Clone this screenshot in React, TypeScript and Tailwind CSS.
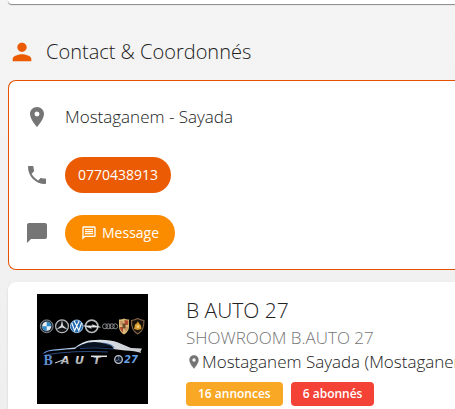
import type { ReactNode } from 'react'
import { MdChatBubble, MdLocationOn, MdOutlineMessage, MdPerson, MdPhone } from 'react-icons/md'

function ShopLogo() {
  return (
    <svg viewBox="0 0 111 110" className="h-[110px] w-[111px] shrink-0" role="img" aria-label="B Auto 27">
      <defs>
        <linearGradient id="chrome" x1="0" y1="0" x2="0" y2="1">
          <stop offset="0" stopColor="#f5f5f5" />
          <stop offset="1" stopColor="#8b8f96" />
        </linearGradient>
        <linearGradient id="body" x1="0" y1="0" x2="1" y2="0">
          <stop offset="0" stopColor="#5d8fdc" />
          <stop offset="0.4" stopColor="#dfe7f2" />
          <stop offset="1" stopColor="#c9ccd0" />
        </linearGradient>
      </defs>
      <rect width="111" height="110" fill="#000" />

      {/* BMW */}
      <circle cx="9.7" cy="32.3" r="6.4" fill="#27323d" stroke="#8e979e" strokeWidth="0.9" />
      <circle cx="9.7" cy="32.3" r="4.5" fill="#e8eef2" />
      <path d="M9.7 32.3v-4.5a4.5 4.5 0 0 1 4.5 4.5zM9.7 32.3v4.5a4.5 4.5 0 0 1-4.5-4.5z" fill="#2f8ac9" />

      {/* Mercedes */}
      <circle cx="25" cy="32.3" r="6.4" fill="#101214" stroke="#b3b8bb" strokeWidth="1.2" />
      <path d="m25 25.8 1.1 5.8 4.6 4-5.7-2.2-5.7 2.2 4.6-4z" fill="#d4d7d9" />

      {/* Volkswagen */}
      <circle cx="39.7" cy="32.3" r="6.3" fill="#226bb0" stroke="#9fc3e4" strokeWidth="1" />
      <path d="m37.2 27 2.5 5 2.5-5M34.8 29l2.8 7.6 2.1-4.3 2.1 4.3 2.8-7.6" fill="none" stroke="#fff" strokeWidth="1.1" />

      {/* Opel */}
      <circle cx="54.7" cy="32.3" r="6.2" fill="none" stroke="#b5b8ba" strokeWidth="1.6" />
      <path d="M46.5 31.8H56l-1-1.2 8.5 2.6h-10l1 1.2z" fill="#e2e4e5" stroke="#e2e4e5" strokeWidth="0.4" />

      {/* Audi */}
      <g fill="none" stroke="#8d9092" strokeWidth="0.9">
        <circle cx="68" cy="32.3" r="2.5" />
        <circle cx="71.4" cy="32.3" r="2.5" />
        <circle cx="74.8" cy="32.3" r="2.5" />
        <circle cx="78.2" cy="32.3" r="2.5" />
      </g>

      {/* Porsche */}
      <path d="M82 25.500q2.500.400 5-1 2.500 1.400 5 1v7q0 5-5 8-5-3-5-8z" fill="#d9ba78" />
      <path d="M87.500 26q2 .600 3.700.400V31h-3.700zM82.800 33H86v5.500q-3-2-3.200-5.500z" fill="#b04a33" />
      <path d="M83 28h3M83 30h3M88 34h3M88 36h2.300" stroke="#a4503a" strokeWidth="0.7" />
      <path d="M85.500 29.500h3v4L87 35l-1.500-1.500z" fill="#6b4c2e" />

      {/* Lamborghini */}
      <path d="M94.500 26.500q3.500-.5 6.200-2 2.700 1.500 6.200 2 .5 10-6.200 13.500-6.700-3.500-6.200-13.500z" fill="#17120b" stroke="#876749" strokeWidth="1.1" />
      <path d="m97 35 1-4.500 2-1.500.8-1.800 1.200 2 2 2.300.4 3.500-3.600 1z" fill="#d89a2b" />
      <path d="m99.500 31.500 2.500-.5.5 2.500-2.500.5z" fill="#f2d185" />

      {/* car outline */}
      <path d="M37 54q7-7 20-7.500Q70 46 79 53z" fill="#07111f" />
      <path d="M6 60q1-3.500 10-4.500l22-2q8-6.500 16-7.300 17-1.500 27 2.300l13 5.500 11 .5-1.500 3 .5 1.500q-6-2.500-16-2.500L76 55q1-3-6-5-14-4-25 .5-5 2-7 4.500-18 1-27 2.500z" fill="url(#body)" />
      <path d="M43 54.500q15-1.500 33 .5 4-3.500-10-6" fill="none" stroke="#274e91" strokeWidth="0.8" />
      <path d="M8 61q28-5 63-3" fill="none" stroke="#31558e" strokeWidth="0.9" />

      <text x="6.5" y="70.5" fill="#5f8fd2" fontSize="14" fontFamily="'Liberation Serif', serif" fontWeight="700">B</text>
      <g fontFamily="'DejaVu Sans', sans-serif" fontWeight="700" fontStyle="italic">
        <text x="24 38 56" y="69.500" fill="url(#chrome)" fontSize="11">AUT</text>
        <text x="87" y="69" fill="#68a0e5" fontSize="10">27</text>
      </g>
      <path d="m18 69 8-3" stroke="#c7c9cb" strokeWidth="1.200" />
      <path d="M54 62.300h16" stroke="#e2e3e5" strokeWidth="1.500" />
      <circle cx="81.500" cy="65.500" r="3.800" fill="#0d1727" stroke="#c3c8cf" strokeWidth="1.300" />
      <path d="m81.500 62 .5 3.500 2 2M82 65.500 79 67" stroke="#6f8db8" strokeWidth="0.700" />
    </svg>
  )
}

function ContactRow({ icon, children }: { icon: ReactNode; children: ReactNode }) {
  return (
    <li className="flex h-[58px] items-center gap-4">
      <span className="flex w-6 justify-center text-2xl text-[#757575]">{icon}</span>
      {children}
    </li>
  )
}

export default function App() {
  return (
    <main className="min-h-screen overflow-hidden bg-linear-to-b from-[#f4f4f4] to-[#efefef] pl-2 font-['Open_Sans','Noto_Sans',sans-serif] font-light text-[#212121]">
      <div className="h-1 rounded-bl-lg bg-white shadow-[0_1px_1px_rgba(0,0,0,0.45)]" />

      <h2 className="flex h-[76px] items-center gap-[10px] pt-5 text-xl">
        <MdPerson className="size-7 text-[#ea5b04]" />
        Contact &amp; Coordonnés
      </h2>

      <section className="rounded-l-lg border border-r-0 border-[#e65100] bg-white py-[7px] pl-4">
        <ul>
          <ContactRow icon={<MdLocationOn />}>
            <span className="text-[17px] leading-6">Mostaganem - Sayada</span>
          </ContactRow>
          <ContactRow icon={<MdPhone />}>
            <a href="tel:0770438913" className="flex h-9 items-center rounded-full bg-[#ea5b04] px-[13px] text-sm font-medium text-white">
              0770438913
            </a>
          </ContactRow>
          <ContactRow icon={<MdChatBubble />}>
            <button type="button" className="flex h-9 items-center gap-[5px] rounded-full bg-[#fb8c00] px-4 text-sm font-medium text-white">
              <MdOutlineMessage className="size-4" />
              Message
            </button>
          </ContactRow>
        </ul>
      </section>

      <section className="mt-3 flex gap-[38px] rounded-l-lg bg-white py-3 pl-[29px] shadow-sm">
        <ShopLogo />
        <div className="shrink-0 whitespace-nowrap">
          <h3 className="text-[21px] leading-8">B AUTO 27</h3>
          <p className="text-[17px] leading-6 text-[#757575]">SHOWROOM B.AUTO 27</p>
          <p className="flex items-center text-[17px] leading-6">
            <MdLocationOn className="size-4 text-[#757575]" />
            Mostaganem Sayada (Mostaganem)
          </p>
          <div className="mt-2 flex gap-2 text-xs font-semibold text-white">
            <span className="flex h-6 items-center rounded bg-[#f9a825] px-3">16 annonces</span>
            <span className="flex h-6 items-center rounded bg-[#f44336] px-3">6 abonnés</span>
          </div>
        </div>
      </section>
    </main>
  )
}
